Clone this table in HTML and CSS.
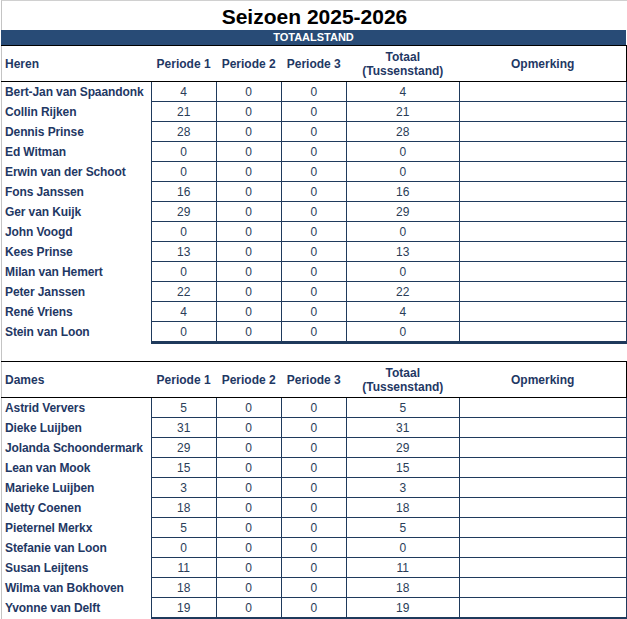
FILE: index.html
```html
<!DOCTYPE html>
<html lang="nl">
<head>
<meta charset="utf-8">
<title>Seizoen 2025-2026</title>
<link rel="stylesheet" href="styles.css">
</head>
<body>
<div class="sheet">
  <h1 class="title">Seizoen 2025-2026</h1>
  <div class="band">TOTAALSTAND</div>

  <table class="standings">
    <colgroup>
      <col class="c-name"><col class="c-p"><col class="c-p"><col class="c-p"><col class="c-tot"><col class="c-rem">
    </colgroup>
    <thead>
      <tr class="head">
        <th class="h-name">Heren</th><th>Periode 1</th><th>Periode 2</th><th>Periode 3</th><th>Totaal<br>(Tussenstand)</th><th class="h-last">Opmerking</th>
      </tr>
    </thead>
    <tbody>
      <tr><td class="name">Bert-Jan van Spaandonk</td><td>4</td><td>0</td><td>0</td><td>4</td><td></td></tr>
      <tr><td class="name">Collin Rijken</td><td>21</td><td>0</td><td>0</td><td>21</td><td></td></tr>
      <tr><td class="name">Dennis Prinse</td><td>28</td><td>0</td><td>0</td><td>28</td><td></td></tr>
      <tr><td class="name">Ed Witman</td><td>0</td><td>0</td><td>0</td><td>0</td><td></td></tr>
      <tr><td class="name">Erwin van der Schoot</td><td>0</td><td>0</td><td>0</td><td>0</td><td></td></tr>
      <tr><td class="name">Fons Janssen</td><td>16</td><td>0</td><td>0</td><td>16</td><td></td></tr>
      <tr><td class="name">Ger van Kuijk</td><td>29</td><td>0</td><td>0</td><td>29</td><td></td></tr>
      <tr><td class="name">John Voogd</td><td>0</td><td>0</td><td>0</td><td>0</td><td></td></tr>
      <tr><td class="name">Kees Prinse</td><td>13</td><td>0</td><td>0</td><td>13</td><td></td></tr>
      <tr><td class="name">Milan van Hemert</td><td>0</td><td>0</td><td>0</td><td>0</td><td></td></tr>
      <tr><td class="name">Peter Janssen</td><td>22</td><td>0</td><td>0</td><td>22</td><td></td></tr>
      <tr><td class="name">René Vriens</td><td>4</td><td>0</td><td>0</td><td>4</td><td></td></tr>
      <tr class="last"><td class="name">Stein van Loon</td><td>0</td><td>0</td><td>0</td><td>0</td><td></td></tr>
    </tbody>
  </table>

  <div class="spacer"></div>

  <table class="standings">
    <colgroup>
      <col class="c-name"><col class="c-p"><col class="c-p"><col class="c-p"><col class="c-tot"><col class="c-rem">
    </colgroup>
    <thead>
      <tr class="head">
        <th class="h-name">Dames</th><th>Periode 1</th><th>Periode 2</th><th>Periode 3</th><th>Totaal<br>(Tussenstand)</th><th class="h-last">Opmerking</th>
      </tr>
    </thead>
    <tbody>
      <tr><td class="name">Astrid Ververs</td><td>5</td><td>0</td><td>0</td><td>5</td><td></td></tr>
      <tr><td class="name">Dieke Luijben</td><td>31</td><td>0</td><td>0</td><td>31</td><td></td></tr>
      <tr><td class="name">Jolanda Schoondermark</td><td>29</td><td>0</td><td>0</td><td>29</td><td></td></tr>
      <tr><td class="name">Lean van Mook</td><td>15</td><td>0</td><td>0</td><td>15</td><td></td></tr>
      <tr><td class="name">Marieke Luijben</td><td>3</td><td>0</td><td>0</td><td>3</td><td></td></tr>
      <tr><td class="name">Netty Coenen</td><td>18</td><td>0</td><td>0</td><td>18</td><td></td></tr>
      <tr><td class="name">Pieternel Merkx</td><td>5</td><td>0</td><td>0</td><td>5</td><td></td></tr>
      <tr><td class="name">Stefanie van Loon</td><td>0</td><td>0</td><td>0</td><td>0</td><td></td></tr>
      <tr><td class="name">Susan Leijtens</td><td>11</td><td>0</td><td>0</td><td>11</td><td></td></tr>
      <tr><td class="name">Wilma van Bokhoven</td><td>18</td><td>0</td><td>0</td><td>18</td><td></td></tr>
      <tr class="last"><td class="name">Yvonne van Delft</td><td>19</td><td>0</td><td>0</td><td>19</td><td></td></tr>
    </tbody>
  </table>
</div>
</body>
</html>
```

FILE: styles.css
```css
html, body {
  margin: 0;
  padding: 0;
  background: #ffffff;
}

.sheet {
  width: 626px;
  margin-left: 1px;
  border-left: 1px solid #c4c4c4;
  border-top: 1px solid #d0d0d0;
  font-family: "Liberation Sans", Arial, sans-serif;
  color: #1f3864;
  box-sizing: border-box;
  min-height: 619px;
}

.title {
  margin: 0;
  height: 29px;
  line-height: 31px;
  font-size: 21px;
  font-weight: bold;
  color: #000000;
  text-align: center;
}

.band {
  height: 15px;
  line-height: 15px;
  margin-left: -1px;
  width: 625px;
  background: #284b76;
  color: #ffffff;
  font-size: 11px;
  font-weight: bold;
  text-align: center;
}

.standings {
  border-collapse: collapse;
  table-layout: fixed;
  width: 626px;
  margin-left: -1px;
  font-size: 12px;
}

.c-name { width: 150px; }
.c-p { width: 65px; }
.c-tot { width: 113px; }
.c-rem { width: 167px; }

.head th {
  height: 35px;
  padding: 0;
  border-top: 1px solid #000000;
  border-bottom: 1px solid #000000;
  font-weight: bold;
  color: #1f3864;
  text-align: center;
  vertical-align: middle;
  line-height: 14px;
}

.head .h-name {
  text-align: left;
  padding-left: 4px;
}

.head .h-last {
  border-right: 1px solid #000000;
}

.standings td {
  height: 19px;
  padding: 0;
  border: 1px solid #1f3a5c;
  text-align: center;
  vertical-align: middle;
  color: #2a3d58;
  line-height: 14px;
}

.standings td.name {
  border: none;
  text-align: left;
  padding-left: 4px;
  font-weight: bold;
  color: #1f3864;
  white-space: nowrap;
  letter-spacing: -0.1px;
}

.standings thead + tbody tr:first-child td:not(.name) {
  border-top: 1px solid #000000;
}

.standings tr.last td:not(.name) {
  border-bottom: 3px solid #1f3a5c;
}

.spacer {
  height: 17px;
}
```
